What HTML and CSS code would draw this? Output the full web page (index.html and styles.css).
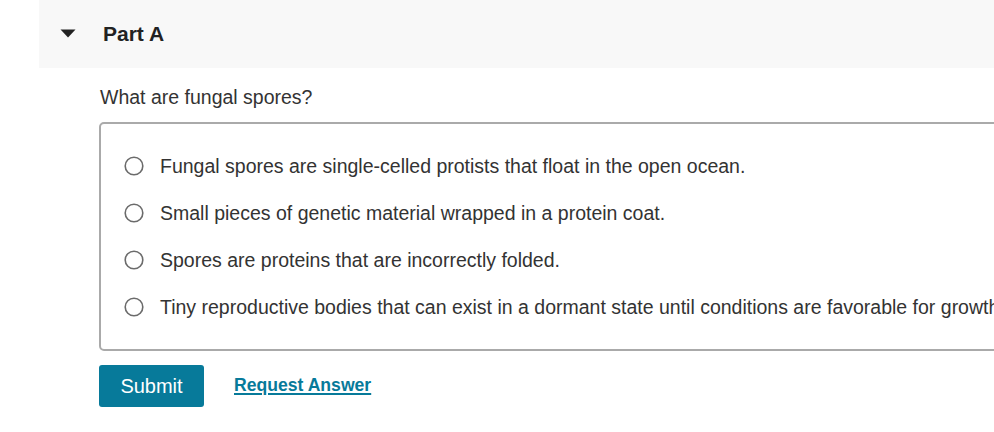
FILE: index.html
```html
<!DOCTYPE html>
<html lang="en">
<head>
<meta charset="utf-8">
<title>Part A</title>
<link rel="stylesheet" href="styles.css">
</head>
<body>
<div class="part">
  <div class="part-header">
    <svg class="caret" width="16" height="9" viewBox="0 0 16 9"><path d="M0.5 0.5 L15.5 0.5 L8 8.5 Z" fill="#222"/></svg>
    <span class="part-title">Part A</span>
  </div>
  <div class="part-body">
    <p class="question">What are fungal spores?</p>
    <div class="choices">
      <label class="choice"><svg class="radio" width="20" height="20" viewBox="0 0 20 20"><circle cx="10" cy="10" r="8.8" fill="#fff" stroke="#6b6b6b" stroke-width="1.6"/></svg><span>Fungal spores are single-celled protists that float in the open ocean.</span></label>
      <label class="choice"><svg class="radio" width="20" height="20" viewBox="0 0 20 20"><circle cx="10" cy="10" r="8.8" fill="#fff" stroke="#6b6b6b" stroke-width="1.6"/></svg><span>Small pieces of genetic material wrapped in a protein coat.</span></label>
      <label class="choice"><svg class="radio" width="20" height="20" viewBox="0 0 20 20"><circle cx="10" cy="10" r="8.8" fill="#fff" stroke="#6b6b6b" stroke-width="1.6"/></svg><span>Spores are proteins that are incorrectly folded.</span></label>
      <label class="choice"><svg class="radio" width="20" height="20" viewBox="0 0 20 20"><circle cx="10" cy="10" r="8.8" fill="#fff" stroke="#6b6b6b" stroke-width="1.6"/></svg><span>Tiny reproductive bodies that can exist in a dormant state until conditions are favorable for growth.</span></label>
    </div>
    <div class="actions">
      <button class="submit" type="button">Submit</button>
      <a class="request" href="#">Request Answer</a>
    </div>
  </div>
</div>
</body>
</html>
```
FILE: styles.css
```css
html, body {
  margin: 0;
  padding: 0;
  overflow: hidden;
  background: #fff;
}
body {
  font-family: "Liberation Sans", Arial, sans-serif;
  color: #333;
  width: 994px;
  height: 432px;
}
.part-header {
  margin-left: 39px;
  height: 68px;
  background: #f8f8f8;
  display: flex;
  align-items: center;
  padding-left: 21px;
  width: 1200px;
}
.caret {
  display: block;
  margin-top: -1px;
}
.part-title {
  margin-left: 27px;
  font-weight: bold;
  font-size: 21px;
  color: #222;
}
.part-body {
  padding-left: 99px;
}
.question {
  margin: 16px 0 0 1px;
  font-size: 19.5px;
  line-height: 26px;
  color: #333;
}
.choices {
  margin-top: 12px;
  width: 1100px;
  border: 2px solid #aaa;
  border-radius: 5px;
  padding: 29px 0 29px 0;
  display: flex;
  flex-direction: column;
  gap: 21px;
}
.choice {
  display: flex;
  align-items: center;
  height: 26px;
  padding-left: 23px;
  font-size: 19.5px;
  color: #333;
  white-space: nowrap;
}
.radio {
  display: block;
  flex: none;
  margin-right: 16px;
}
.actions {
  margin-top: 14px;
  display: flex;
  align-items: center;
}
.submit {
  width: 105px;
  height: 42px;
  background: #077a9a;
  color: #fff;
  border: none;
  border-radius: 3px;
  font-family: "Liberation Sans", Arial, sans-serif;
  font-size: 20px;
  padding: 0;
}
.request {
  margin-left: 30px;
  margin-top: -2px;
  color: #077a9a;
  font-weight: bold;
  font-size: 17.6px;
  text-decoration: underline;
  text-underline-offset: 2px;
  text-decoration-thickness: 2px;
}
```
